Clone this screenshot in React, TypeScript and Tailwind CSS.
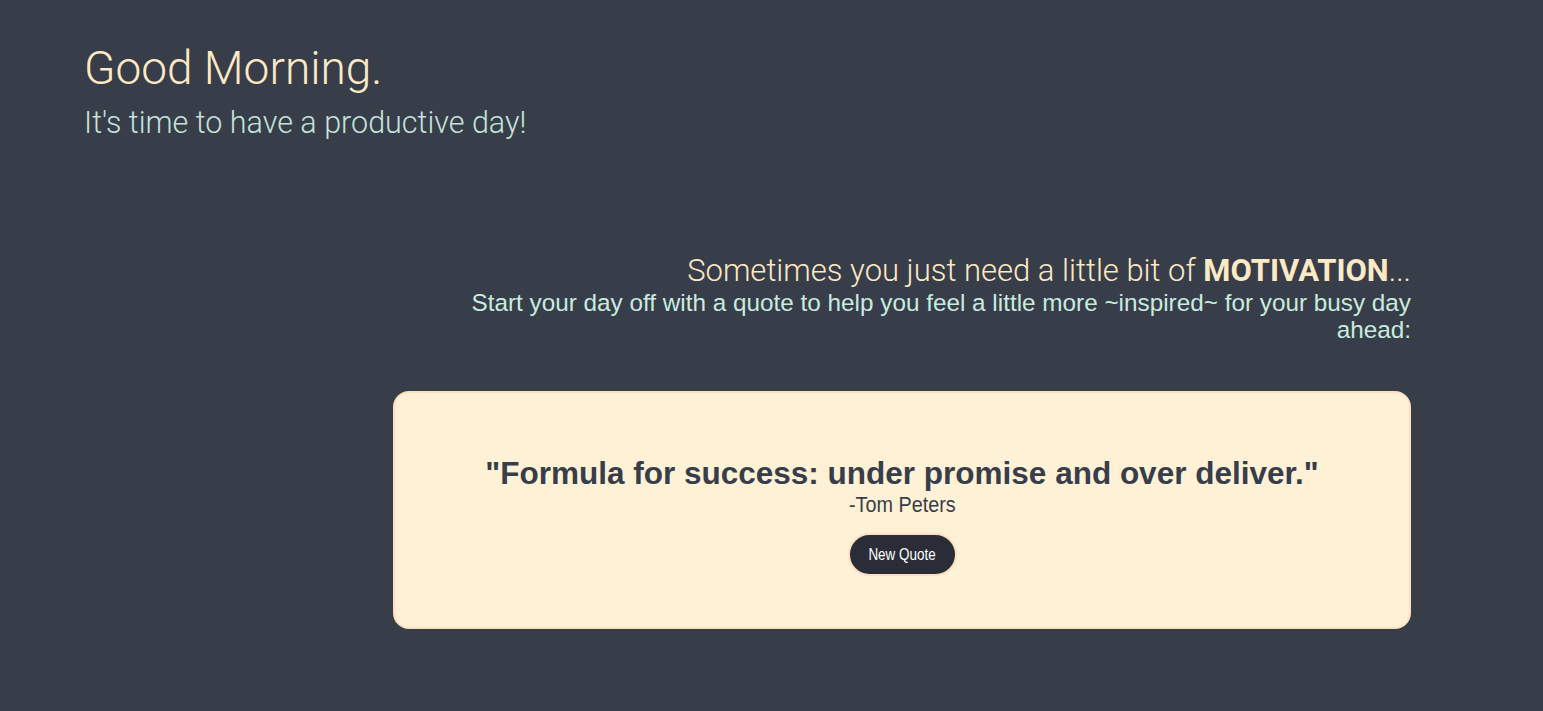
export default function App() {
	return (
		<div className="min-h-[711px] bg-[#383d4a] pl-[84px] pr-[132px] pt-[40px] font-['Roboto',sans-serif]">
			<header>
				<h1 className="text-[46px] font-light leading-[56px] text-[#fde9c3]">Good Morning.</h1>
				<p className="mt-[9px] text-[30.5px] font-light leading-[36px] text-[#c4e3da]">It's time to have a productive day!</p>
			</header>

			<section className="ml-auto mt-[112px] w-[1018px] text-right">
				<h2 className="text-[31px] font-light leading-[36px] text-[#fde9c3]">
					Sometimes you just need a little bit of <span className="font-bold">MOTIVATION</span>...
				</h2>
				<p className="ml-auto max-w-[960px] font-['Liberation_Sans',sans-serif] text-[24.3px] leading-[27px] text-[#c8ebdf]">
					Start your day off with a quote to help you feel a little more ~inspired~ for your busy day
					ahead:
				</p>

				<div className="mt-[48px] flex flex-col items-center rounded-2xl border-2 border-[#fde0c0] bg-[#fef1d6] px-8 pb-[51px] pt-[62px] text-center text-[#383d4a] font-['Liberation_Sans',sans-serif]">
					<p className="text-[31.5px] font-bold leading-[36px]">
						"Formula for success: under promise and over deliver."
					</p>
					<p className="inline-block origin-center scale-x-[0.9] text-[22px] leading-[28px]">-Tom Peters</p>
					<button className="mt-[14px] flex h-[43px] w-[109px] items-center justify-center rounded-full border-[2.5px] border-[#fee0c0] bg-[#2a2d37] text-white">
						<span className="inline-block scale-x-[0.84] text-[16px] leading-[18px] whitespace-nowrap">New Quote</span>
					</button>
				</div>
			</section>
		</div>
	);
}
